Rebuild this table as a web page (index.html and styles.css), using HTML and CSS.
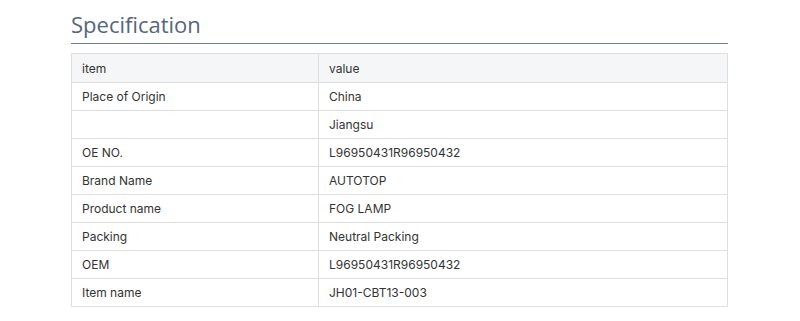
FILE: index.html
```html
<!DOCTYPE html>
<html>
<head>
<meta charset="utf-8">
<link rel="stylesheet" href="styles.css">
</head>
<body>
<div class="spec">
  <h2 class="spec-title">Specification</h2>
  <table class="spec-table">
    <tr class="head"><td class="k">item</td><td>value</td></tr>
    <tr><td class="k">Place of Origin</td><td>China</td></tr>
    <tr><td class="k"></td><td>Jiangsu</td></tr>
    <tr><td class="k">OE NO.</td><td>L96950431R96950432</td></tr>
    <tr><td class="k">Brand Name</td><td>AUTOTOP</td></tr>
    <tr><td class="k">Product name</td><td>FOG LAMP</td></tr>
    <tr><td class="k">Packing</td><td>Neutral Packing</td></tr>
    <tr><td class="k">OEM</td><td>L96950431R96950432</td></tr>
    <tr><td class="k">Item name</td><td>JH01-CBT13-003</td></tr>
  </table>
</div>
</body>
</html>
```
FILE: styles.css
```css
html, body { margin: 0; padding: 0; background: #fff; }
.spec { width: 657px; margin: 0 0 0 71px; padding-top: 8px; }
.spec-title {
  margin: 0;
  font-family: "Open Sans", "Noto Sans", sans-serif;
  font-weight: 400;
  font-size: 22px;
  line-height: 33px;
  color: #55657f;
  border-bottom: 1px solid #6f7e96;
  padding-bottom: 2px;
}
.spec-table {
  margin-top: 9px;
  width: 100%;
  border-collapse: collapse;
  font-family: Inter, "Liberation Sans", sans-serif;
  font-size: 12px;
  color: #333;
}
.spec-table td {
  border: 1px solid #dedede;
  height: 28px;
  padding: 0 10px;
  box-sizing: border-box;
  vertical-align: middle;
}
.spec-table td.k { width: 247px; }
.spec-table tr.head td { background: #f5f6f8; height: 29px; }
```
